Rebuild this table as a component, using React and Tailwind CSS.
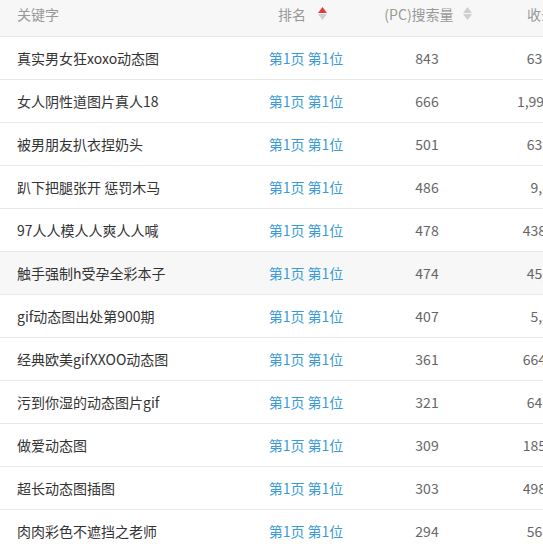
import React from "react";

const rows = [
  ["真实男女狂xoxo动态图", "843", "63,520"],
  ["女人阴性道图片真人18", "666", "1,990,000"],
  ["被男朋友扒衣捏奶头", "501", "63,100"],
  ["趴下把腿张开 惩罚木马", "486", "9,860"],
  ["97人人模人人爽人人喊", "478", "438,000"],
  ["触手强制h受孕全彩本子", "474", "45,300"],
  ["gif动态图出处第900期", "407", "5,320"],
  ["经典欧美gifXXOO动态图", "361", "664,000"],
  ["污到你湿的动态图片gif", "321", "64,700"],
  ["做爱动态图", "309", "185,000"],
  ["超长动态图插图", "303", "498,000"],
  ["肉肉彩色不遮挡之老师", "294", "56,200"],
];

function SortIcon({ up, gap }) {
  return (
    <span className={`${gap} inline-flex flex-col items-center justify-center`}>
      <svg width="9" height="6" viewBox="0 0 9 6" className="block">
        <path d="M4.5 0 L9 6 L0 6 Z" fill={up ? "#e4393c" : "#cfcfcf"} />
      </svg>
      <svg width="9" height="6" viewBox="0 0 9 6" className="mt-[1px] block">
        <path d="M0 0 L9 0 L4.5 6 Z" fill="#cfcfcf" />
      </svg>
    </span>
  );
}

export default function App() {
  return (
    <div
      className="h-[544px] w-[543px] overflow-hidden bg-white text-[14px]"
      style={{ fontFamily: '"Noto Sans CJK SC", "Noto Sans", sans-serif' }}
    >
      <div className="w-[611px]">
        <div className="grid h-[37px] grid-cols-[245px_124px_116px_126px] border-b border-[#e8e8e8] bg-[#f7f7f7] pt-[4px] leading-[20px] text-[#999]">
          <div className="pl-[17px]">关键字</div>
          <div className="flex items-start justify-center pr-[9px]">
            <span>排名</span>
            <span className="mt-[3px] flex">
              <SortIcon up gap="ml-[12px]" />
            </span>
          </div>
          <div className="flex items-start justify-center pl-[2px]">
            <span>(PC)搜索量</span>
            <span className="mt-[3px] flex">
              <SortIcon gap="ml-[9px]" />
            </span>
          </div>
          <div className="text-center">收录量</div>
        </div>
        {rows.map(([kw, vol, inc], i) => (
          <div
            key={i}
            className={`grid h-[43px] grid-cols-[245px_124px_116px_126px] items-center border-b border-[#e8e8e8] leading-[20px] ${
              i === 5 ? "bg-[#f7f7f7]" : "bg-white"
            }`}
          >
            <div className="pl-[17px] text-[#333]">{kw}</div>
            <div className="pr-[2px] text-center text-[#3b9bd6]">第1页 第1位</div>
            <div className="text-center text-[#666]">{vol}</div>
            <div className="text-center text-[#666]">{inc}</div>
          </div>
        ))}
      </div>
    </div>
  );
}
